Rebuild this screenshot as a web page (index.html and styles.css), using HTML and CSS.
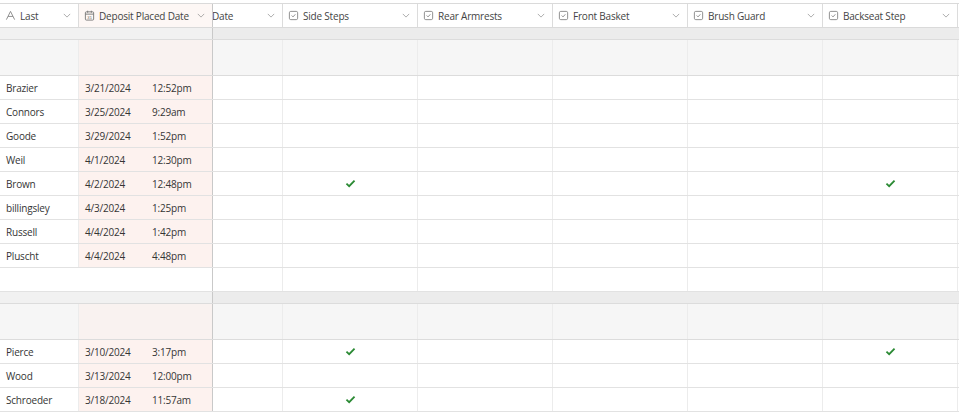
FILE: index.html
```html
<!DOCTYPE html>
<html>
<head>
<meta charset="utf-8">
<link rel="stylesheet" href="styles.css">
</head>
<body>
<div class="grid">
  <div class="row head">
    <div class="c c-last"><svg class="ico" viewBox="0 0 12 12"><path d="M1.5 10.5 L6 1.5 L10.5 10.5 M3.3 7 H8.7" fill="none" stroke="#888" stroke-width="1"/></svg><span class="lbl">Last</span><svg class="chev" viewBox="0 0 10 6"><path d="M1 1 L5 5 L9 1" fill="none" stroke="#999" stroke-width="1"/></svg></div>
    <div class="c c-dep"><svg class="ico" viewBox="0 0 12 12"><rect x="1.5" y="2" width="9" height="9" rx="1" fill="none" stroke="#777" stroke-width="1"/><path d="M1.5 4.5 H10.5 M4 0.8 V3 M8 0.8 V3" stroke="#777" stroke-width="1"/><text x="6" y="9.8" font-size="4.6" text-anchor="middle" fill="#777" font-family="DejaVu Sans">31</text></svg><span class="lbl">Deposit Placed Date</span><svg class="chev" viewBox="0 0 10 6"><path d="M1 1 L5 5 L9 1" fill="none" stroke="#999" stroke-width="1"/></svg></div>
    <div class="c c-date"><span class="lbl cut">Date</span><svg class="chev" viewBox="0 0 10 6"><path d="M1 1 L5 5 L9 1" fill="none" stroke="#999" stroke-width="1"/></svg></div>
    <div class="c c-w"><svg class="ico" viewBox="0 0 12 12"><rect x="1.5" y="1.5" width="9" height="9" rx="1.5" fill="none" stroke="#888" stroke-width="1"/><path d="M4 6 L5.5 7.5 L8 4.7" fill="none" stroke="#888" stroke-width="1"/></svg><span class="lbl">Side Steps</span><svg class="chev" viewBox="0 0 10 6"><path d="M1 1 L5 5 L9 1" fill="none" stroke="#999" stroke-width="1"/></svg></div>
    <div class="c c-w"><svg class="ico" viewBox="0 0 12 12"><rect x="1.5" y="1.5" width="9" height="9" rx="1.5" fill="none" stroke="#888" stroke-width="1"/><path d="M4 6 L5.5 7.5 L8 4.7" fill="none" stroke="#888" stroke-width="1"/></svg><span class="lbl">Rear Armrests</span><svg class="chev" viewBox="0 0 10 6"><path d="M1 1 L5 5 L9 1" fill="none" stroke="#999" stroke-width="1"/></svg></div>
    <div class="c c-w"><svg class="ico" viewBox="0 0 12 12"><rect x="1.5" y="1.5" width="9" height="9" rx="1.5" fill="none" stroke="#888" stroke-width="1"/><path d="M4 6 L5.5 7.5 L8 4.7" fill="none" stroke="#888" stroke-width="1"/></svg><span class="lbl">Front Basket</span><svg class="chev" viewBox="0 0 10 6"><path d="M1 1 L5 5 L9 1" fill="none" stroke="#999" stroke-width="1"/></svg></div>
    <div class="c c-w"><svg class="ico" viewBox="0 0 12 12"><rect x="1.5" y="1.5" width="9" height="9" rx="1.5" fill="none" stroke="#888" stroke-width="1"/><path d="M4 6 L5.5 7.5 L8 4.7" fill="none" stroke="#888" stroke-width="1"/></svg><span class="lbl">Brush Guard</span><svg class="chev" viewBox="0 0 10 6"><path d="M1 1 L5 5 L9 1" fill="none" stroke="#999" stroke-width="1"/></svg></div>
    <div class="c c-w"><svg class="ico" viewBox="0 0 12 12"><rect x="1.5" y="1.5" width="9" height="9" rx="1.5" fill="none" stroke="#888" stroke-width="1"/><path d="M4 6 L5.5 7.5 L8 4.7" fill="none" stroke="#888" stroke-width="1"/></svg><span class="lbl">Backseat Step</span><svg class="chev" viewBox="0 0 10 6"><path d="M1 1 L5 5 L9 1" fill="none" stroke="#999" stroke-width="1"/></svg></div>
    <div class="c c-end"></div>
  </div>

  <div class="band"><div class="band-l"></div><div class="band-r"></div></div>
  <div class="row ghead">
    <div class="c c-last"></div><div class="c c-dep"></div><div class="c c-date"></div><div class="c c-w"></div><div class="c c-w"></div><div class="c c-w"></div><div class="c c-w"></div><div class="c c-w"></div><div class="c c-end"></div>
  </div>

  <div id="g1"></div>
  <div class="row blank">
    <div class="c c-last"></div><div class="c c-dep"></div><div class="c c-date"></div><div class="c c-w"></div><div class="c c-w"></div><div class="c c-w"></div><div class="c c-w"></div><div class="c c-w"></div><div class="c c-end"></div>
  </div>

  <div class="band"><div class="band-l"></div><div class="band-r"></div></div>
  <div class="row ghead">
    <div class="c c-last"></div><div class="c c-dep"></div><div class="c c-date"></div><div class="c c-w"></div><div class="c c-w"></div><div class="c c-w"></div><div class="c c-w"></div><div class="c c-w"></div><div class="c c-end"></div>
  </div>
  <div id="g2"></div>
</div>
<script src="app.js"></script>
</body>
</html>
```
FILE: app.js
```js
const g1 = [
  ["Brazier","3/21/2024","12:52pm",0,0],
  ["Connors","3/25/2024","9:29am",0,0],
  ["Goode","3/29/2024","1:52pm",0,0],
  ["Weil","4/1/2024","12:30pm",0,0],
  ["Brown","4/2/2024","12:48pm",1,1],
  ["billingsley","4/3/2024","1:25pm",0,0],
  ["Russell","4/4/2024","1:42pm",0,0],
  ["Pluscht","4/4/2024","4:48pm",0,0]
];
const g2 = [
  ["Pierce","3/10/2024","3:17pm",1,1],
  ["Wood","3/13/2024","12:00pm",0,0],
  ["Schroeder","3/18/2024","11:57am",1,0]
];
const check = '<svg class="chk" viewBox="0 0 12 10"><path d="M1.5 5.2 L4.5 8 L10.5 1.8" fill="none" stroke="#2b8a34" stroke-width="2"/></svg>';
function render(id, data) {
  const el = document.getElementById(id);
  el.outerHTML = data.map(r =>
    '<div class="row data">' +
    '<div class="c c-last"><span class="txt">' + r[0] + '</span></div>' +
    '<div class="c c-dep"><span class="d">' + r[1] + '</span><span class="t">' + r[2] + '</span></div>' +
    '<div class="c c-date"></div>' +
    '<div class="c c-w mid">' + (r[3] ? check : '') + '</div>' +
    '<div class="c c-w"></div><div class="c c-w"></div><div class="c c-w"></div>' +
    '<div class="c c-w mid">' + (r[4] ? check : '') + '</div>' +
    '<div class="c c-end"></div></div>'
  ).join('');
}
render('g1', g1);
render('g2', g2);
```
FILE: styles.css
```css
* { box-sizing: border-box; }
html, body { margin: 0; padding: 0; background: #fff; }
body {
  font-family: "Open Sans", "Noto Sans", sans-serif;
  font-size: 10px;
  letter-spacing: -0.2px;
  color: #353535;
  width: 959px;
  height: 412px;
  overflow: hidden;
}
.grid { padding-top: 3px; }
.row {
  display: grid;
  grid-template-columns: 79px 134px 70px 135px 135px 135px 135px 135px 1px;
  border-bottom: 1px solid #e2e2e2;
}
.c {
  border-right: 1px solid #ececec;
  display: flex;
  align-items: center;
  min-width: 0;
  overflow: hidden;
  white-space: nowrap;
}
.c-dep { border-right: 1px solid #c9c9c9; background: #fdf2ef; }
.c-end { border-right: none; }

.head {
  height: 25px;
  border-top: 1px solid #dadada;
  border-bottom: 1px solid #dadada;
  background: #fff;
  color: #444;
}
.head .c { padding: 0 6px 0 5px; border-right-color: #dcdcdc; background: #fff; }
.head .c-dep { background: #fdf7f5; border-right-color: #c9c9c9; }
.head .c-end { border-right: none; padding: 0; }
.ico { width: 11px; height: 11px; flex: none; margin-right: 4px; }
.lbl { flex: 1; overflow: hidden; }
.lbl.cut { margin-left: -6px; }
.chev { width: 8px; height: 5px; flex: none; margin-right: 1px; }

.band {
  display: grid;
  grid-template-columns: 213px 1fr;
  height: 12px;
  border-bottom: 1px solid #dcdcdc;
}
.band-l { background: #f1f1f1; border-right: 1px solid #c9c9c9; }
.band-r { background: #ececec; }

.ghead { height: 36px; background: #f6f6f6; border-bottom: 1px solid #dcdcdc; }
.ghead .c { background: #f6f6f6; }
.ghead .c-dep { background: #f9f2f0; }

.data, .blank { height: 24px; }
.data .c-last, .blank .c-last { background: #fff; }
.blank .c-last { border-right: none; }
.blank .c-dep { border-right: 1px solid #c9c9c9; background: #fff; }
.txt { padding-left: 6px; }
.d { padding-left: 6px; width: 73px; flex: none; }
.mid { justify-content: center; }
.chk { width: 11px; height: 9px; }
```
